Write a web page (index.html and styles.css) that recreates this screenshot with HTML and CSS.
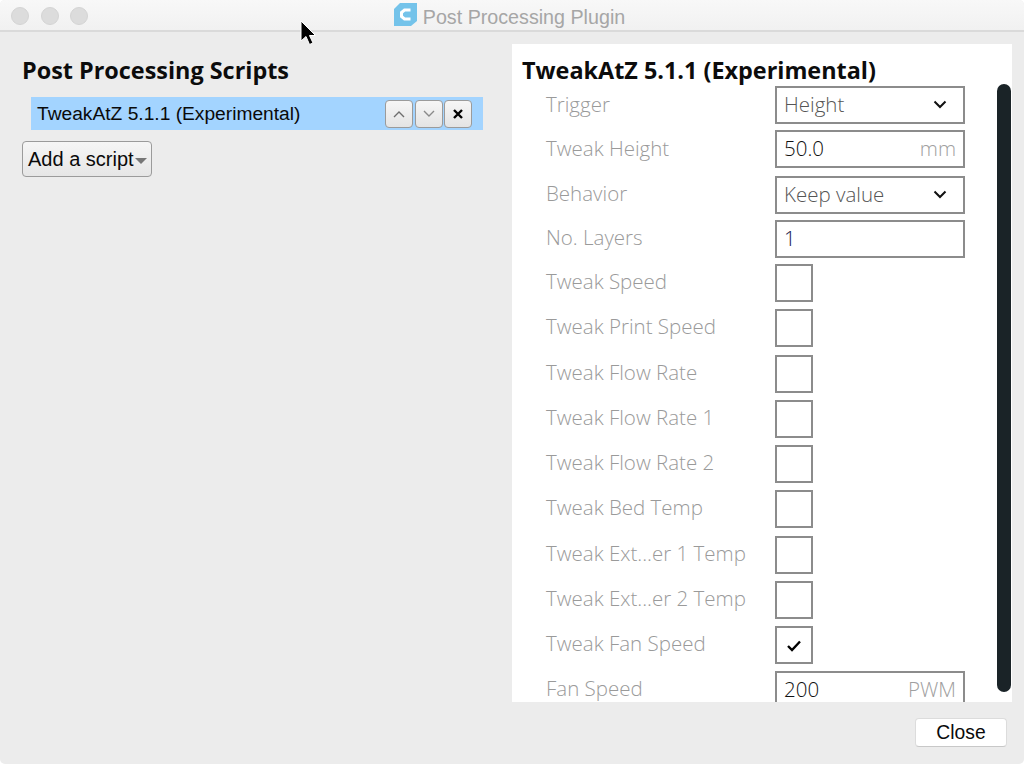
FILE: index.html
```html
<!DOCTYPE html>
<html lang="en">
<head>
<meta charset="utf-8">
<title>Post Processing Plugin</title>
<link rel="stylesheet" href="styles.css">
</head>
<body>
<div class="window">
  <header class="titlebar">
    <div class="lights"><span class="light"></span><span class="light"></span><span class="light"></span></div>
    <div class="title">
      <svg class="logo" width="25" height="25" viewBox="0 0 25 25"><path d="M7 1H24V19L18 24H1V7Z" fill="#74c3ea"/><path d="M17.5 8H11.5L8.5 10.5V14.5L11.5 17H17.5" fill="none" stroke="#fff" stroke-width="3"/></svg>
      <span>Post Processing Plugin</span>
    </div>
  </header>
  <main class="content">
    <section class="left">
      <h2 class="heading">Post Processing Scripts</h2>
      <div class="script-item">
        <span class="script-name">TweakAtZ 5.1.1 (Experimental)</span>
        <div class="script-buttons">
          <button class="mini up"><svg width="14" height="8" viewBox="0 0 14 8"><path d="M2 7L7 2L12 7" fill="none" stroke="#6e6e6e" stroke-width="1.4"/></svg></button>
          <button class="mini"><svg width="14" height="8" viewBox="0 0 14 8"><path d="M2 1L7 6L12 1" fill="none" stroke="#8a8a8a" stroke-width="1.4"/></svg></button>
          <button class="mini"><svg width="10" height="10" viewBox="0 0 10 10"><path d="M1 1L9 9M9 1L1 9" fill="none" stroke="#000" stroke-width="2.4"/></svg></button>
        </div>
      </div>
      <button class="add">Add a script<span class="caret"></span></button>
    </section>
    <section class="panel">
      <h2 class="heading panel-heading">TweakAtZ 5.1.1 (Experimental)</h2>
      <div class="rows">
        <div class="row low"><span class="label">Trigger</span><div class="control"><span class="value muted">Height</span><svg class="chev" width="14" height="9" viewBox="0 0 14 9"><path d="M1.500 1.500L7 7L12.500 1.500" fill="none" stroke="#111" stroke-width="2"/></svg></div></div>
        <div class="row tall low"><span class="label">Tweak Height</span><div class="control"><span class="value">50.0</span><span class="unit">mm</span></div></div>
        <div class="row"><span class="label">Behavior</span><div class="control"><span class="value muted">Keep value</span><svg class="chev" width="14" height="9" viewBox="0 0 14 9"><path d="M1.500 1.500L7 7L12.500 1.500" fill="none" stroke="#111" stroke-width="2"/></svg></div></div>
        <div class="row"><span class="label">No. Layers</span><div class="control"><span class="value navy">1</span></div></div>
        <div class="row check"><span class="label">Tweak Speed</span><div class="box"></div></div>
        <div class="row check"><span class="label">Tweak Print Speed</span><div class="box"></div></div>
        <div class="row check"><span class="label">Tweak Flow Rate</span><div class="box"></div></div>
        <div class="row check"><span class="label">Tweak Flow Rate 1</span><div class="box"></div></div>
        <div class="row check"><span class="label">Tweak Flow Rate 2</span><div class="box"></div></div>
        <div class="row check"><span class="label">Tweak Bed Temp</span><div class="box"></div></div>
        <div class="row check"><span class="label">Tweak Ext...er 1 Temp</span><div class="box"></div></div>
        <div class="row check"><span class="label">Tweak Ext...er 2 Temp</span><div class="box"></div></div>
        <div class="row check"><span class="label">Tweak Fan Speed</span><div class="box"><svg width="16" height="13" viewBox="0 0 16 13"><path d="M2 7L6 11L14 2.500" fill="none" stroke="#000" stroke-width="2.400"/></svg></div></div>
        <div class="row"><span class="label">Fan Speed</span><div class="control"><span class="value">200</span><span class="unit">PWM</span></div></div>
      </div>
      <div class="scrollbar"></div>
    </section>
  </main>
  <footer class="footer"><button class="close">Close</button></footer>
  <svg class="cursor" width="18" height="28" viewBox="0 0 18 28"><path d="M2 1V21L7 16.500L10.500 24.500L14 23L10.500 15.500H16.500Z" fill="#000" stroke="#fff" stroke-width="1"/></svg>
</div>
</body>
</html>
```

FILE: styles.css
```css
* { box-sizing: border-box; }
html, body { margin: 0; padding: 0; background: #fff; }
body { width: 1024px; height: 764px; overflow: hidden; }
.window {
  position: relative;
  width: 1024px;
  height: 764px;
  display: flex;
  flex-direction: column;
  background: #ececec;
  border-radius: 5px;
  overflow: hidden;
  font-family: "Liberation Sans", Arial, sans-serif;
}
.titlebar {
  height: 32px;
  flex: none;
  position: relative;
  display: flex;
  align-items: center;
  justify-content: center;
  background: linear-gradient(#f8f8f8, #f1f1f1);
  border-bottom: 2px solid #dadada;
}
.lights {
  position: absolute;
  left: 11px;
  top: 7px;
  display: flex;
  gap: 11.500px;
}
.light { width: 18px; height: 18px; border-radius: 50%; background: #dcdcdc; border: 1px solid #d4d4d4; }
.title {
  display: flex;
  align-items: center;
  gap: 5px;
  margin-right: 6px;
  font-size: 19.700px;
  color: #a6a6a6;
  padding-top: 4px;
}
.logo { flex: none; margin-top: -6px; }
.content { flex: none; height: 670px; padding: 12px 12px 0 22px; display: flex; }
.left { width: 490px; flex: none; }
.heading {
  margin: 0;
  font-family: "Open Sans", sans-serif;
  font-weight: 700;
  font-size: 23.400px;
  line-height: 30px;
  color: #0c0c0c;
  white-space: nowrap;
}
.left .heading { margin-top: 11px; }
.script-item {
  margin: 12px 29px 0 9px;
  height: 33px;
  background: #a3d4ff;
  display: flex;
  align-items: center;
  justify-content: space-between;
  padding: 0 11px 0 6px;
}
.script-name { font-size: 19.200px; color: #0a0a0a; }
.script-buttons { display: flex; gap: 1px; }
.mini {
  width: 28px;
  height: 28px;
  padding: 0;
  display: flex;
  align-items: center;
  justify-content: center;
  background: linear-gradient(#f6f6f6, #e4e4e4);
  border: 1.500px solid #9b9b9b;
  border-radius: 4px;
}
.mini.up { margin-right: 1px; }
.add {
  margin-top: 11px;
  width: 130px;
  height: 36px;
  padding: 0 0 0 5px;
  display: flex;
  align-items: center;
  background: linear-gradient(#f6f6f6, #e6e6e6);
  border: 1.500px solid #9b9b9b;
  border-radius: 4px;
  font-family: inherit;
  font-size: 20px;
  color: #0a0a0a;
}
.caret {
  margin-left: 1px;
  margin-top: 3px;
  border-left: 6px solid transparent;
  border-right: 6px solid transparent;
  border-top: 6px solid #777;
}
.panel {
  position: relative;
  width: 500px;
  height: 658px;
  background: #fff;
  overflow: hidden;
  padding-left: 10px;
}
.panel-heading { margin-top: 11px; }
.rows { margin-top: 1px; }
.row {
  display: flex;
  height: 44px;
  align-items: flex-start;
  padding-left: 24px;
}
.row.tall { height: 46px; }
.row.check { height: 45.250px; }
.label {
  width: 229px;
  flex: none;
  font-family: "Open Sans", sans-serif;
  font-weight: 300;
  font-size: 20.500px;
  line-height: 38px;
  margin-top: -2px;
  height: 38px;
  color: #9a9a9a;
  white-space: nowrap;
}
.row.low .label { margin-top: -1px; }
.control {
  width: 190px;
  height: 38px;
  flex: none;
  border: 2px solid #8c8c8c;
  background: #fff;
  display: flex;
  align-items: center;
  justify-content: space-between;
  padding: 0 7px 2px;
  font-family: "Open Sans", sans-serif;
  font-weight: 300;
  font-size: 20.500px;
  line-height: 32px;
  color: #111;
}
.value.muted { color: #555; }
.value.navy { color: #14144a; }
.unit { color: #a0a0a0; }
.chev { margin-right: 9px; }
.box {
  width: 38px;
  height: 38px;
  flex: none;
  border: 2px solid #8c8c8c;
  background: #fff;
  display: flex;
  align-items: center;
  justify-content: center;
}
.scrollbar {
  position: absolute;
  left: 485px;
  top: 40px;
  width: 14px;
  height: 608px;
  border-radius: 7px;
  background: #1a2327;
}
.footer { flex: 1; display: flex; justify-content: flex-end; align-items: flex-start; padding: 16px 17px 0 0; }
.close {
  width: 92px;
  height: 29px;
  padding: 0;
  background: #fff;
  border: 1px solid #dcdcdc;
  border-bottom-color: #c8c8c8;
  border-radius: 4px;
  font-family: inherit;
  font-size: 19.300px;
  color: #0a0a0a;
}
.cursor { position: absolute; left: 299px; top: 20px; }
```
